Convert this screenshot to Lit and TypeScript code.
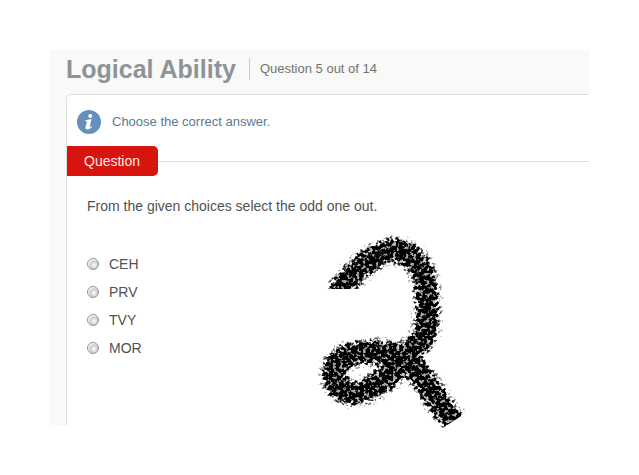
import { LitElement, html, css } from "lit";
import { customElement, state } from "lit/decorators.js";

@customElement("brush-sketch")
class BrushSketch extends LitElement {
  static styles = css`
    :host { display: block; }
    svg { display: block; }
    .stroke {
      fill: none;
      stroke: #000;
      stroke-width: 24;
      stroke-linejoin: round;
      stroke-linecap: round;
    }
  `;

  render() {
    return html`
      <svg width="160" height="210" viewBox="310 225 160 210" role="img" aria-label="Brush drawing of the number 2">
        <defs>
          <filter id="bristle" filterUnits="userSpaceOnUse" x="310" y="225" width="160" height="210" color-interpolation-filters="sRGB">
            <feGaussianBlur in="SourceGraphic" stdDeviation="3.4" result="soft" />
            <feTurbulence type="fractalNoise" baseFrequency="0.3" numOctaves="2" seed="11" />
            <feColorMatrix values="0 0 0 0 0  0 0 0 0 0  0 0 0 0 0  3 0 0 0 -1" result="grain" />
            <feComposite in="soft" in2="grain" operator="arithmetic" k1="0.5" k2="1.6" k3="1.2" k4="-1.25" />
            <feGaussianBlur stdDeviation="0.6" />
          </filter>
          <clipPath id="ends">
            <path d="M310 225H480V404L430 436H310V330H380V289H310Z" />
          </clipPath>
        </defs>
        <g clip-path="url(#ends)">
          <g filter="url(#bristle)">
            <path
              class="stroke"
              d="M341 289C350 275 374 253 392 250C407 250 418 260 424 277C429 295 427 313 427 326C425 341 414 347 404 357C395 371 381 386 361 392C347 396 334 388 334 375C334 359 350 352 367 352C383 352 398 353 409 362C424 376 434 399 457 426"
            />
          </g>
        </g>
      </svg>
    `;
  }
}

@customElement("app-root")
class AppRoot extends LitElement {
  @state() private answer = "";

  private choices = ["CEH", "PRV", "TVY", "MOR"];

  static styles = css`
    :host {
      display: block;
      padding: 50px;
      background: #fff;
      font-family: "Liberation Sans", Arial, sans-serif;
      font-size: 14px;
      line-height: 20px;
      color: #525252;
    }
    .panel {
      background: #f9f9f7;
      padding-left: 16px;
    }
    .header {
      display: flex;
      align-items: center;
      height: 44px;
      padding-bottom: 6px;
      box-sizing: border-box;
    }
    h1 {
      margin: 0;
      font-size: 25px;
      line-height: 40px;
      color: #8e9399;
      white-space: nowrap;
    }
    .progress {
      margin-left: 13px;
      padding-left: 10px;
      border-left: 1px solid #ccc;
      font-size: 13px;
      line-height: 22px;
      color: #737373;
    }
    .card {
      background: #fff;
      border: solid #dcdee0;
      border-width: 1px 0 0 1px;
      border-top-left-radius: 5px;
    }
    .hint {
      display: flex;
      align-items: center;
      gap: 11px;
      padding: 15px 10px 12px;
      font-size: 13px;
      line-height: 24px;
      color: #5b7a92;
    }
    .hint p, .prompt { margin: 0; }
    .section {
      display: flex;
      align-items: center;
    }
    .section::after {
      content: "";
      flex: 1;
      border-top: 1px solid #dcdcdc;
    }
    h2 {
      margin: 0;
      padding: 0 18px 0 17px;
      border-radius: 0 5px 5px 0;
      background: #d8140f;
      color: #fdeaea;
      font-size: 14px;
      font-weight: normal;
      line-height: 30px;
    }
    .body {
      display: grid;
      grid-template-columns: 243px auto;
      justify-content: start;
      padding: 20px 0 0 0;
    }
    .left { padding-left: 20px; }
    .prompt { white-space: nowrap; }
    fieldset {
      display: grid;
      gap: 8px;
      margin: 38px 0 0;
      padding: 0;
      border: 0;
    }
    label {
      display: flex;
      align-items: center;
      gap: 10px;
    }
    input {
      appearance: none;
      width: 12px;
      height: 12px;
      margin: 0;
      border: 1px solid #949494;
      border-radius: 50%;
      background: radial-gradient(circle at 60% 60%, #f4f4f4 10%, #c4c6c8 48%, #f6f6f6 62%);
    }
    input:checked {
      background: radial-gradient(circle, #456 35%, #f6f6f6 45%);
    }
    brush-sketch { margin-top: 29px; margin-bottom: -10px; }
  `;

  render() {
    return html`
      <main class="panel">
        <header class="header">
          <h1>Logical Ability</h1>
          <span class="progress">Question 5 out of 14</span>
        </header>
        <section class="card">
          <div class="hint">
            <svg width="24" height="24" viewBox="0 0 24 24" aria-hidden="true">
              <circle cx="12" cy="12" r="12" fill="#6590bd" />
              <circle cx="13.2" cy="6" r="2" fill="#fff" />
              <path fill="#fff" d="M8.4 10.2L14.6 9.1L12.7 16.5Q12.5 17.4 13.2 17L14.4 16L15 16.7C13 19 11.4 19.7 9.9 19.4C8.4 19 8.3 18 8.6 16.8L9.9 11.9Q10 11.2 9.4 11.2L8.3 11.2Z" />
            </svg>
            <p>Choose the correct answer.</p>
          </div>
          <div class="section"><h2>Question</h2></div>
          <form class="body">
            <div class="left">
              <p class="prompt" id="prompt">From the given choices select the odd one out.</p>
              <fieldset aria-labelledby="prompt">
                ${this.choices.map(
                  (choice) => html`
                    <label>
                      <input
                        type="radio"
                        name="answer"
                        .value=${choice}
                        .checked=${this.answer === choice}
                        @change=${() => (this.answer = choice)}
                      />
                      ${choice}
                    </label>
                  `
                )}
              </fieldset>
            </div>
            <brush-sketch></brush-sketch>
          </form>
        </section>
      </main>
    `;
  }
}
